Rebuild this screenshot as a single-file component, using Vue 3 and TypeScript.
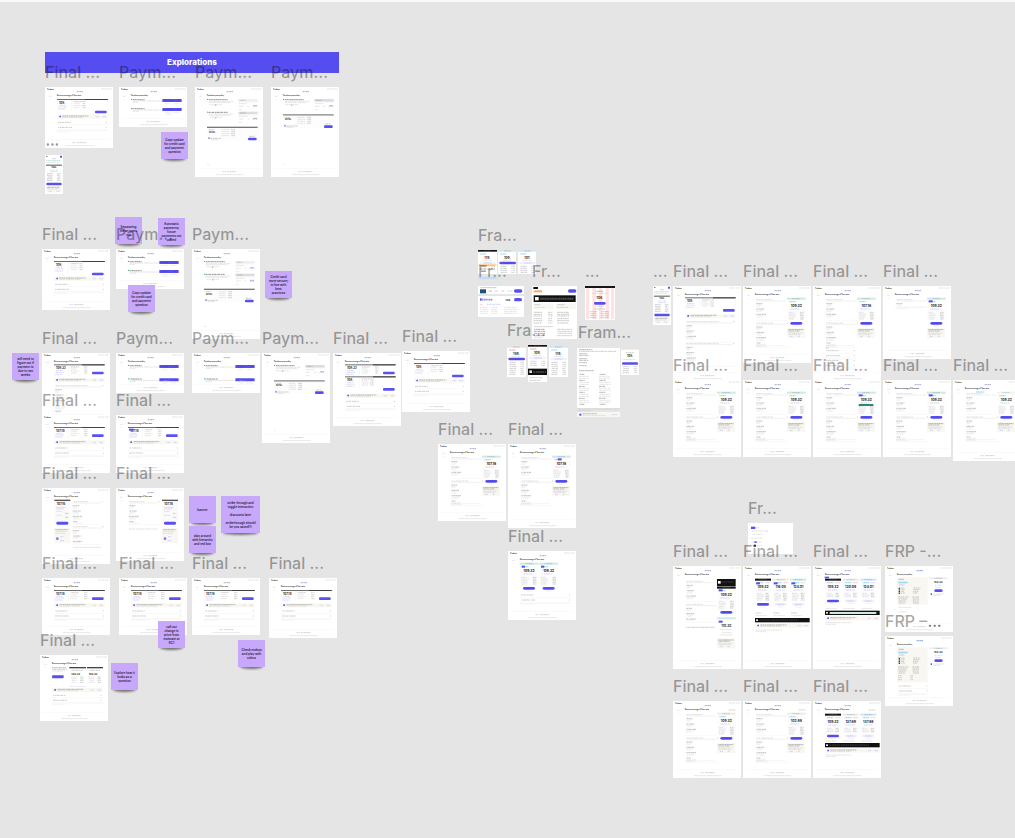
<script setup lang="ts">
interface Shape {
  k: 'rect' | 'line' | 'text'
  x: number
  y: number
  w: number
  h: number
  c: string
  r?: number
  s?: string
  anchor?: 'start' | 'middle' | 'end'
}
interface Board { x: number; y: number; w: number; h: number; art: Shape[]; clear?: boolean }
interface Label { x: number; y: number; text: string }
interface Note { x: number; y: number; w: number; h: number; text: string }

// Artwork inside a board is drawn on a grid of three units per canvas pixel.
const UNIT = 3
const BLUE = '#5850ee'
const INK = '#333333'
const MID = '#858585'
const SOFT = '#b9b9b9'
const LINK = '#9c98f0'
const CREAM = '#f8f7f2'
const MINT = '#cdeae3'
const SKY = '#52b4e8'

const rect = (x: number, y: number, w: number, h: number, c: string, r = 0): Shape => ({ k: 'rect', x, y, w, h, c, r })
const line = (x: number, y: number, w: number, c = SOFT, h = 2): Shape => ({ k: 'line', x, y, w, h, c })
const text = (x: number, y: number, size: number, s: string, c = INK, anchor: Shape['anchor'] = 'start'): Shape =>
  ({ k: 'text', x, y, w: 0, h: size, c, s, anchor })

function header(title: string): Shape[] {
  return [
    text(7, 8, 5, 'Fenbow', '#222222'),
    line(168, 6, 32, SOFT),
    line(94, 14, 20, '#7774b4', 3),
    line(12, 28, 9, '#c4c2f6'),
    line(15, 37, 4, '#c9c9c9'),
    text(36, 28, 5, title, '#222222'),
  ]
}
function footer(h: number): Shape[] {
  return [
    rect(8, h - 27, 188, 1, '#efefef'),
    line(82, h - 16, 11, LINK),
    line(96, h - 16, 28, '#8b8b8b'),
    line(62, h - 7, 84, SOFT),
  ]
}
function notice(y: number, x = 36, w = 152): Shape[] {
  return [
    rect(x, y, w, 12, CREAM),
    rect(x + 7, y + 3, 5, 5, BLUE, 1),
    line(x + 16, y + 4, 78, '#555555'),
    line(x + 16, y + 8, 62, SOFT),
    line(x + w - 36, y + 6, 10, LINK),
    line(x + w - 16, y + 6, 11, LINK),
  ]
}
function folds(y: number, x = 36, w = 152): Shape[] {
  return [
    line(x + 3, y, 38, MID), line(x + w - 6, y, 4, MID), rect(x, y + 7, w, 1, '#eeeeee'),
    line(x + 3, y + 15, 42, MID), line(x + w - 6, y + 15, 4, MID), rect(x, y + 21, w, 1, '#eeeeee'),
    line(x, y + 25, w, '#cccccc', 1), line(x, y + 28, 40, '#cccccc', 1),
  ]
}
function summary(y: number, price: string, low = false): Shape[] {
  const rows = [0, 1, 2, 3].flatMap((i) => [
    line(86, y + 8 + i * 6, 24 - (i % 2) * 6, i ? SOFT : MID),
    line(low ? 112 : 126, y + 8 + i * 6, 10, MID),
  ])
  return [
    rect(36, y, 152, 3, '#6c6c6c'), rect(120, y, 68, 3, '#414141'),
    rect(36, y + 3, 1, 38, '#f0f0f0'), rect(187, y + 3, 1, 38, '#f0f0f0'), rect(78, y + 4, 1, 32, '#ededed'),
    text(42, y + 14, 9, price, '#333333'),
    line(42, y + 19, 20, LINK), line(40, y + 24, 26, low ? SOFT : LINK), line(40, y + 30, 22, LINK),
    ...rows,
    rect(150, low ? y + 35 : y + 22, 35, 8, BLUE, 3), line(155, low ? y + 39 : y + 26, 24, '#837cf5', 1),
  ]
}
function review(h: number, price = '109.', low = false): Shape[] {
  const n = low ? 83 : 76
  return [...header('Review coverage of Your auto'), ...summary(36, price, low), ...notice(n), ...folds(n + 23), ...footer(h)]
}
function question(h: number, gap = 31): Shape[] {
  const part = (y: number): Shape[] => [
    rect(36, y, 3, 3, '#35b78a'), line(40, y + 2, 37, '#555555', 3),
    line(41, y + 6, 88, SOFT), line(41, y + 10, 18, SOFT),
    rect(130, y, 58, 9, BLUE, 1), line(136, y + 4, 22, '#3b34b5'), line(174, y + 4, 10, '#3b34b5'),
    line(138, y + 14, 17, '#cccccc'), line(164, y + 14, 17, '#cccccc'),
  ]
  return [...header('Purchase your policy'), ...part(36), ...part(36 + gap - 4), line(140, 82, 18, '#cccccc'), ...footer(h)]
}
function field(y: number, first: boolean): Shape[] {
  return [
    rect(36, y, 3, 3, '#35b78a'), line(40, y + 2, 58, '#555555', 3),
    line(41, y + 7, 74), line(41, y + 11, 66), line(42, y + 17, 40, SOFT), rect(60, y + 17, 4, 3, '#ef8c70'),
    rect(130, y, 58, 8, first ? '#efefef' : '#dddddd'), line(134, y + 4, 18, MID),
    rect(130, y + 10, 58, 1, '#eeeeee'), line(132, y + 14, 25, SOFT),
    line(132, y + 22, 14, SOFT), line(156, y + 22, 7, SOFT), line(174, y + 20, 12, '#7771b8', 3), line(172, y + 23, 15, LINK),
    line(132, y + 32, 9, SOFT),
  ]
}
function paySummary(y: number): Shape[] {
  return [
    rect(36, y, 152, 4, '#777777'), rect(36, y + 4, 152, 37, '#fdfdfd'),
    line(40, y + 9, 18, MID), text(42, y + 18, 8, '$119.', '#333333'),
    ...[0, 1, 2, 3].flatMap((i) => [line(80, y + 9 + i * 6, 22, SOFT), line(108, y + 9 + i * 6, 12, MID)]),
    rect(40, y + 32, 4, 5, BLUE, 2), line(46, y + 35, 34, MID), line(46, y + 39, 22),
    line(162, y + 29, 16, MID), rect(159, y + 33, 26, 8, BLUE, 3),
  ]
}
function payLong(h: number): Shape[] {
  return [...header('Purchase your policy'), ...field(36, true), ...field(74, false), ...paySummary(119), line(36, 233, 7), ...footer(h)]
}
function payShort(h: number): Shape[] {
  return [...header('Purchase your policy'), ...field(36, false), ...paySummary(82), line(36, 233, 5), ...footer(h)]
}
function listing(x: number, y: number, n: number, w = 92): Shape[] {
  const out: Shape[] = []
  for (let i = 0; i < n; i++) {
    const yy = y + i * 4
    const wide = i < 2
    const ww = wide ? w - 6 + i * 4 - (i ? 0 : 36) : 10 + ((i * 17) % 21)
    if (i > 1 && i % 4 === 2) continue
    out.push(line(x, yy, ww, i % 4 === 3 || !i ? '#686868' : '#a5a5a5', i % 4 === 3 ? 2 : 1))
  }
  out.push(line(x + w, y, 4, MID), rect(x - 3, y + n * 4 + 1, w + 8, 1, '#eeeeee'))
  return out
}
function quote(x: number, y: number, price: string, top = MINT, blue = true, w = 56, short = false): Shape[] {
  const mid = x + w / 2
  const b = short ? y + 63 : y + 73
  const out: Shape[] = [
    rect(x, y, w, b - y - 1, '#fdfdfd'), rect(x, y, w, 6, top), line(mid - 12, y + 3, 24, top === '#111111' ? '#777777' : '#779e96'),
    line(x + 6, y + 12, 20, SKY, 3), text(mid, y + 29, 10, price, '#272727', 'middle'),
    line(x + 9, y + 34, 28, LINK),
  ]
  for (let i = 0; i < (short ? 3 : 5); i++) out.push(line(x + 5, y + 44 + i * 5, 15 + ((i * 7) % 9), SOFT, 2), line(x + w - 17, y + 44 + i * 5, 11, MID, 2))
  out.push(rect(mid - 18, b, 36, 8, blue ? BLUE : '#efeeff', 4), line(mid - 10, b + 4, 20, blue ? '#3c35b8' : LINK), line(mid - 9, b + 12, 18, '#d2d2d2'))
  return out
}
function aside(x: number, y: number): Shape[] {
  return [rect(x, y, 54, 30, CREAM), line(x + 4, y + 5, 46, '#444444'), line(x + 4, y + 9, 34, '#666666'), line(x + 4, y + 15, 42), line(x + 4, y + 19, 38), line(x + 9, y + 25, 9, LINK), line(x + 30, y + 25, 9, LINK)]
}
function detail(h: number, price: string, top = MINT, list = 35): Shape[] {
  const first = Math.min(15, list)
  return [
    ...header('Review coverage of Your auto'),
    ...listing(40, 41, first),
    ...(list > 15 ? listing(40, 111, list - 17) : []),
    line(38, list > 15 ? 179 : 65, 88, '#bcbcbc', 1), line(38, list > 15 ? 182 : 68, 35, '#bcbcbc', 1),
    ...quote(132, 35, price, top), ...aside(132, 126), ...footer(h),
  ]
}
function leftCard(h: number, flip: boolean): Shape[] {
  const cx = flip ? 138 : 37
  const lx = flip ? 39 : 92
  return [
    ...header('Review coverage of Your auto'), ...listing(lx, 41, 17, 88), ...(flip ? [] : listing(lx, 116, 13, 88)),
    line(lx, flip ? 123 : 178, 86),
    rect(cx, 35, 48, 4, '#555555'), rect(cx, 39, 48, 68, '#fafafa'), text(cx + 7, 52, 9, '107.16', '#333333'),
    line(cx + 6, 58, 28, LINK), line(cx + 6, 63, 23, LINK), line(cx + 6, 70, 18), line(cx + 32, 76, 11, MID), line(cx + 6, 82, 18), line(cx + 32, 88, 11, MID),
    rect(cx + 6, 101, 36, 9, BLUE, 4), rect(cx, 120, 48, 45, CREAM), line(cx + 3, 125, 38, '#555555'), line(cx + 3, 130, 33), line(cx + 3, 136, 30),
    rect(cx + 5, 148, 8, 8, '#8078ea', 4), line(cx + 17, 146, 10, LINK), line(cx + 17, 158, 12, LINK), ...footer(h),
  ]
}
function trio(h: number, prices: string[], tops: string[], bar: number, mint = false): Shape[] {
  const short = bar < 140
  return [
    ...header('Review coverage of Your auto'),
    ...prices.flatMap((p, i) => [
      ...quote(36 + i * 53, 38, p, tops[i], i === 0, 48, short),
      line(68 + i * 53, 50, 13, '#d98298'),
    ]),
    ...[0, 1, 2].flatMap((i) => (short ? [line(38 + i * 53, bar - 6, 34)] : [line(38 + i * 53, bar - 15, 18, MID), line(38 + i * 53, bar - 7, 34)])),
    rect(36, bar, 164, 13, '#101010'), rect(39, bar + 4, 6, 5, '#dddddd'),
    mint ? rect(50, bar + 4, 140, 6, MINT) : line(50, bar + 6, 118, '#888888'),
    ...notice(bar + 17, 36, 164), line(38, bar + 36, 78), line(38, bar + 41, 32), ...footer(h),
  ]
}
function frp(h: number, long: boolean): Shape[] {
  return [
    ...header('Review your policy'), line(94, 14, 20, SKY), rect(36, 34, 92, long ? 105 : 82, CREAM),
    line(40, 40, 17, '#555555'), rect(40, 47, 28, 5, '#9ed9f6'), line(40, 57, 18, MID),
    ...[0, 1, 2, 3].flatMap((i) => [rect(41, 65 + i * 5, 4, 4, '#444444'), line(47, 66 + i * 5, 12, MID), line(84, 66 + i * 5, 22 - i * 3, MID)]),
    ...[0, 1, 2, 3].flatMap((i) => [line(40, 93 + i * 6, 30 - i * 3, '#777777'), line(82, 93 + i * 6, 20, '#777777')]),
    ...(long ? [0, 1, 2].flatMap((i) => [line(40, 119 + i * 6, 10, MID), line(76, 119 + i * 6, 8, MID)]) : []),
    rect(133, 34, 54, 5, '#ededed'), line(148, 37, 24, MID), text(160, 52, 8, '169.32', '#333333', 'middle'), line(148, 58, 23), line(150, 64, 20),
    rect(148, 70, 25, 8, BLUE, 4), rect(137, 82, 4, 5, BLUE), line(144, 84, 35), line(144, 88, 22),
    ...(long ? folds(150, 38, 92) : [line(40, 124, 38), line(40, 138, 25), line(40, 150, 28)]), ...footer(h),
    ...(long ? [] : [rect(133, 176, 6, 6, '#aaaaaa', 3), rect(146, 176, 6, 6, '#aaaaaa', 3), rect(159, 176, 6, 6, '#aaaaaa', 3)]),
  ]
}
function mobile(): Shape[] {
  return [
    rect(4, 3, 3, 3, '#444444'), rect(45, 2, 6, 6, BLUE, 1), line(20, 11, 14, '#7774b4'), line(4, 17, 45, '#58b8a4'), line(4, 22, 40, SOFT),
    rect(3, 29, 48, 3, '#555555'), text(27, 40, 8, '109.', INK, 'middle'), line(14, 45, 26), line(15, 50, 24, LINK),
    ...[0, 1, 2, 3, 4].flatMap((i) => [line(6, 56 + i * 5, 17, MID), line(36, 56 + i * 5, 10, MID)]),
    rect(4, 83, 46, 8, BLUE, 3), rect(3, 94, 48, 18, CREAM), line(6, 97, 38, '#555555'), line(6, 102, 34), line(11, 109, 9, LINK), line(34, 109, 9, LINK),
  ]
}
function mini(price: string, top: string, blue: boolean, h: number, accent = SKY): Shape[] {
  const out: Shape[] = [rect(0, 0, 58, 5, top), line(18, 3, 20, MID), line(7, 12, 20, accent, 3), text(28, 27, 10, price, INK, 'middle'), line(14, 31, 28)]
  out.push(rect(4, 35, 50, 8, blue ? BLUE : '#f1f0ff', 4), line(17, 39, 24, blue ? '#4039c4' : LINK))
  for (let y = 49; y < h - 4; y += 6) out.push(line(7, y, 20, MID), line(40, y, 11, MID))
  return out
}

const boards: Board[] = []
const labels: Label[] = []
const put = (x: number, y: number, h: number, art: Shape[], label = '', w = 68, clear = false) => {
  boards.push({ x, y, w, h, art, clear })
  if (label) labels.push({ x, y: y - 25, text: label })
}

put(45, 87, 61, [...review(183, '109.', true), rect(5, 169, 7, 7, '#999999', 3), rect(19, 169, 7, 7, '#999999', 3), rect(32, 169, 7, 7, '#999999', 3)], 'Final ...')
put(119, 87, 40, question(120), 'Paym...')
put(195, 87, 90, payLong(270), 'Paym...')
put(271, 87, 90, payShort(270), 'Paym...')
put(45, 155, 39, mobile(), '', 18)

put(42, 249, 61, review(183, '109.', true), 'Final ...')
put(116, 249, 40, question(120), 'Paym...')
put(192, 249, 90, payLong(270), 'Paym...')

put(42, 353, 64, [...header('Review coverage of Your auto'), ...summary(34, '109.32'), ...notice(75), ...listing(40, 98, 21, 140)], 'Final ...')
put(116, 353, 40, question(120, 44), 'Paym...')
put(192, 353, 40, question(120, 44), 'Paym...')
put(262, 353, 90, payShort(270), 'Paym...')
put(333, 353, 73, [...header('Review coverage of Your auto'), ...summary(34, '109.32'), ...summary(70, '109.', true), ...notice(122), ...folds(145), ...footer(219)], 'Final ...')
put(402, 351, 61, review(183, '109.', true), 'Final ...')
put(42, 415, 58, review(174, '107.16'), 'Final ...')
put(116, 415, 58, [...review(174, '107.16'), rect(39, 41, 14, 6, BLUE)], 'Final ...')
put(42, 488, 76, leftCard(228, false), 'Final ...')
put(116, 488, 73, leftCard(219, true), 'Final ...')
put(42, 578, 57, review(171, '107.16'), 'Final ...')
put(119, 578, 57, review(171, '107.16'), 'Final ...')
put(192, 578, 57, review(171, '107.16'), 'Final ...')
put(269, 578, 60, review(180, '107.16'), 'Final ...')
put(40, 655, 66, [
  ...header('Review coverage of Your auto'), line(36, 38, 42, '#555555'), line(36, 43, 45, '#777777'), line(36, 48, 38), rect(36, 61, 35, 9, BLUE, 3),
  rect(88, 36, 50, 4, '#444444'), rect(141, 36, 48, 4, '#444444'), rect(88, 94, 50, 1, '#c7c4fa'),
  ...[94, 146].flatMap((x) => [line(x, 46, 34, MID), text(x, 59, 8, '109.32'), ...[66, 71, 76, 82].flatMap((y) => [line(x, y, 16), line(x + 26, y, 11, MID)])]),
  ...notice(99), ...folds(121), ...footer(198),
], 'Final ...')

put(478, 250, 24, mini('119.', '#111111', false, 60), 'Fra...', 19)
put(498, 250, 24, mini('109.', '#cdeae3', true, 72), '', 18)
put(518, 250, 24, mini('107.', '#cfe5fa', false, 72), '', 18)
put(478, 264, 16, [rect(1, 0, 54, 7, '#ffd9a1'), line(5, 4, 43, '#e2a451'), line(4, 16, 48, MID), rect(0, 38, 62, 8, '#cde5fb'), line(4, 42, 50, '#72b2eb')], '', 21, true)
put(478, 286, 8, [line(7, 5, 48, '#666666'), rect(6, 10, 18, 12, '#23507b'), line(32, 15, 10, '#222222'), line(50, 15, 10, MID), line(70, 15, 9, MID), line(89, 15, 14, '#37aeb5'), rect(108, 10, 25, 10, BLUE, 5)], 'Fr...', 46)
put(478, 296, 21, [rect(6, 7, 5, 7, BLUE), line(12, 11, 31, '#575a92', 5), text(82, 14, 8, '108.'), rect(108, 6, 24, 10, BLUE, 5), line(6, 25, 9, '#ef89a0'), line(25, 25, 43, LINK), ...[34, 40, 46, 52].flatMap((y) => [line(6, y, 24), line(40, y, 18), line(78, y, 40)])], '', 46)
put(532, 286, 53, [
  rect(4, 3, 14, 6, '#111111'), rect(5, 13, 25, 6, '#f8a860'), rect(108, 10, 25, 10, BLUE, 5), rect(5, 28, 126, 20, '#101010'), rect(9, 33, 11, 10, '#ffffff'), line(23, 38, 101, '#777777', 6),
  rect(4, 53, 59, 17, CREAM), rect(72, 53, 59, 17, CREAM), line(7, 56, 18, MID), line(75, 56, 23, MID), line(7, 64, 32), line(75, 64, 34, LINK),
  ...[79, 85, 90, 98, 104, 111].flatMap((y) => [line(5, y, 25, '#777777'), line(48, y, 13, MID), line(75, y, 36, '#777777')]), line(5, 122, 58, MID),
  ...[130, 136, 142, 149].flatMap((y) => [line(6, y, 33, '#777777', 3), line(75, y, 45, MID)]), line(6, 155, 25, LINK),
], 'Fr...', 45)
put(585, 286, 34, [
  rect(3, 5, 10, 94, '#ffe2e2'), rect(22, 5, 10, 94, '#ffe2e2'), rect(42, 5, 10, 94, '#ffe2e2'), rect(62, 5, 10, 94, '#ffe2e2'), rect(78, 5, 9, 94, '#ffe2e2'), rect(0, 0, 90, 6, '#171717'),
  line(32, 16, 23, '#555555'), line(20, 22, 48), text(44, 38, 10, '108.', INK, 'middle'), rect(27, 48, 35, 8, BLUE, 4), line(32, 61, 25), line(28, 69, 32, MID),
  ...[77, 83, 89, 95].flatMap((y) => [line(15, y, 22, MID), line(48, y, 25, MID)]),
], '...', 30)
put(507, 346, 31, mini('159.', '#e7e4dd', true, 93, '#dc5e7b'), '', 19)
put(528, 345, 37, [...mini('109.', '#111111', false, 70, '#e25e5e'), rect(0, 71, 60, 19, '#101010'), rect(4, 76, 8, 8, '#dddddd'), line(16, 81, 38, '#777777', 4), line(5, 98, 38, MID), line(5, 106, 32, MID)], '', 19)
put(549, 346, 31, mini('119.', '#cfe5fa', false, 93), '', 19)
put(577, 348, 60, [
  line(6, 5, 40, '#444444'), line(6, 10, 112, MID), ...[17, 22, 32, 37, 44, 53].map((y) => line(6, y, 34 - (y % 3) * 5, '#555555')), line(6, 68, 44, '#444444'),
  ...Array.from({ length: 16 }, (_, i) => [line(6, 79 + i * 6, i % 3 ? 30 : 17, i % 3 ? SOFT : '#444444'), line(66, 79 + i * 6, i % 3 ? 34 : 20, i % 3 ? SOFT : '#444444')]).flat(),
], '', 43)
put(577, 408, 4, [line(2, 3, 123, SOFT), line(2, 8, 40, SOFT)], '', 43, true)
put(577, 412, 5, [rect(0, 0, 129, 15, CREAM), rect(7, 5, 6, 6, BLUE), line(17, 5, 43, '#666666'), line(17, 10, 70), line(104, 8, 18, LINK)], '', 43)
put(621, 348, 27, [rect(0, 0, 54, 5, '#e7e4dd'), line(14, 14, 25, MID), text(27, 27, 9, '108.', INK, 'middle'), line(5, 35, 39, LINK), rect(3, 43, 48, 7, BLUE, 3), ...[56, 62, 68, 74].flatMap((y) => [line(5, y, 19, MID), line(38, y, 10, MID)])], '', 18)
labels.push({ x: 507, y: 320, text: 'Fra...' }, { x: 578, y: 322, text: 'Fram...' })

put(438, 444, 77, detail(231, '107.16'), 'Final ...')
put(508, 444, 84, [...detail(252, '107.16'), rect(149, 43, 12, 6, BLUE)], 'Final ...')
put(508, 551, 69, [
  ...header('Review coverage of Your auto'), ...quote(35, 35, '109.32'), ...quote(94, 35, '109.32'), rect(41, 44, 10, 6, BLUE), rect(99, 44, 10, 6, BLUE), ...folds(132), ...footer(207),
], 'Final ...')

put(653, 286, 39, mobile(), '...', 18)
put(673, 286, 95, [...header('Review coverage of Your auto'), ...summary(34, '109.', true), ...notice(84), ...listing(40, 107, 15, 140), ...listing(40, 172, 17, 140), ...footer(285)], 'Final ...')
put(743, 286, 77, detail(231, '109.32'), 'Final ...')
put(813, 286, 95, [...detail(285, '107.16'), line(36, 186, 12, MID), ...folds(194, 36, 92), ...folds(224, 36, 92)], 'Final ...')
put(883, 286, 73, [...detail(219, '109.32', MINT, 5), rect(137, 43, 12, 6, BLUE)], 'Final ...')
put(673, 380, 77, detail(231, '109.32'), 'Final ...')
put(743, 380, 77, detail(231, '109.32'), 'Final ...')
put(813, 380, 77, [...detail(231, '109.32'), rect(137, 43, 12, 6, BLUE), rect(137, 72, 44, 6, '#31866f')], 'Final ...')
put(883, 380, 77, [...detail(231, '109.32'), rect(137, 43, 12, 6, BLUE)], 'Final ...')
put(953, 380, 81, [...detail(243, '109.32', '#f5f3ed'), line(68, 36, 27, SKY, 3)], 'Final ...')

put(748, 523, 31, [rect(9, 11, 13, 7, BLUE), line(24, 14, 10, LINK), line(11, 24, 36), line(49, 24, 11, LINK), line(12, 34, 31), line(8, 46, 34), rect(19, 55, 7, 5, BLUE), line(8, 57, 34), rect(17, 65, 7, 6, '#222222'), line(8, 68, 34)], 'Fr...', 45)
put(673, 566, 103, [
  ...header('Review coverage of Your auto'), ...listing(40, 46, 15), ...listing(40, 115, 13), line(38, 184, 88, MID),
  ...quote(132, 62, '109.32', '#111111'), rect(132, 39, 56, 22, '#111111'), rect(135, 45, 8, 8, '#ffffff'), line(146, 48, 36, '#777777'), rect(137, 70, 12, 6, BLUE),
  rect(132, 154, 56, 6, MINT), rect(137, 164, 12, 6, BLUE), text(160, 183, 10, '110.32', INK, 'middle'), line(142, 191, 35), line(146, 200, 30), line(142, 207, 36),
  ...aside(132, 217), ...footer(309),
], 'Final ...')
put(743, 566, 103, [...trio(309, ['109.32', '116.05', '124.01'], ['#111111', '#f0ece4', MINT], 156), rect(39, 49, 12, 6, BLUE), rect(92, 49, 12, 6, BLUE), rect(145, 49, 12, 6, BLUE)], 'Final ...')
put(813, 566, 103, [...trio(309, ['109.32', '130.08', '124.01'], ['#111111', '#f0ece4', '#cfe5fa'], 134, true), rect(35, 32, 13, 5, BLUE)], 'Final ...')
put(885, 566, 66, frp(198, false), 'FRP -...')
put(885, 636, 70, frp(210, true), 'FRP –...')
put(673, 701, 77, [...detail(231, '109.32', '#f0ece4'), line(166, 27, 22, SOFT, 3)], 'Final ...')
put(743, 701, 77, [...detail(231, '102.88', '#f0ece4'), line(166, 27, 22, SOFT, 3)], 'Final ...')
put(813, 701, 77, [...trio(231, ['109.32', '137.69', '137.68'], ['#111111', '#f0ece4', '#cfe5fa'], 126), line(166, 27, 22, SOFT, 3)], 'Final ...')

const notes: Note[] = [
  { x: 161, y: 132, w: 27, h: 27, text: 'Copy update\nfor credit card\nand payment\nquestion' },
  { x: 115, y: 217, w: 27, h: 27, text: 'Separating\nthese types\nout' },
  { x: 158, y: 218, w: 27, h: 27, text: 'Automatic\npayments/\nfuture\npayments not\nadded' },
  { x: 128, y: 285, w: 27, h: 27, text: 'Copy update\nfor credit card\nand payment\nquestion' },
  { x: 265, y: 271, w: 27, h: 27, text: 'Credit card\nmore secure/\nin line with\nbest\npractices' },
  { x: 12, y: 353, w: 27, h: 27, text: 'still need to\nfigure out if\npayment is\ndue in two\nweeks' },
  { x: 189, y: 496, w: 27, h: 27, text: 'banner' },
  { x: 189, y: 526, w: 27, h: 27, text: 'play around\nwith hierarchy\nand red box' },
  { x: 221, y: 496, w: 39, h: 37, text: 'strike through and\ntoggle interaction\n\ndiscounts later\n\nstrikethrough should\nbe you saved!!)' },
  { x: 158, y: 621, w: 27, h: 27, text: 'call out\nchange in\nprice from\nestimate at\nRC1' },
  { x: 238, y: 640, w: 27, h: 27, text: 'Check mobop\nand play with\ncolors' },
  { x: 111, y: 663, w: 27, h: 27, text: 'Explore how it\nlooks as a\nquestion' },
]

const box = (b: { x: number; y: number; w: number; h: number }) => ({
  left: `${b.x}px`, top: `${b.y}px`, width: `${b.w}px`, height: `${b.h}px`,
})
</script>

<template>
  <main class="canvas">
    <h1 class="banner">Explorations</h1>
    <div v-for="(b, i) in boards" :key="'b' + i" class="board" :class="{ clear: b.clear }" :style="box(b)">
      <svg :viewBox="`0 0 ${b.w * UNIT} ${b.h * UNIT}`" aria-hidden="true">
        <template v-for="(s, j) in b.art" :key="j">
          <rect v-if="s.k === 'rect'" :x="s.x" :y="s.y" :width="s.w" :height="s.h" :rx="s.r" :fill="s.c" />
          <path
            v-else-if="s.k === 'line'"
            class="copy"
            :d="`M${s.x} ${s.y}h${s.w}`"
            :stroke="s.c"
            :stroke-width="s.h"
            :stroke-dashoffset="(s.y * 7 + s.x) % 30"
          />
          <text v-else :x="s.x" :y="s.y" :font-size="s.h" :fill="s.c" :text-anchor="s.anchor">{{ s.s }}</text>
        </template>
      </svg>
    </div>
    <div v-for="(n, i) in notes" :key="'n' + i" class="note" :style="box(n)">
      <p>{{ n.text }}</p>
    </div>
    <span v-for="(l, i) in labels" :key="'l' + i" class="label" :style="{ left: l.x + 'px', top: l.y + 'px' }">{{ l.text }}</span>
  </main>
</template>

<style>
body {
  margin: 0;
  background: #e5e5e5;
}
</style>

<style scoped>
.canvas {
  position: relative;
  box-sizing: border-box;
  width: 100%;
  min-height: 100vh;
  overflow: hidden;
  background: #e5e5e5;
  box-shadow: inset 0 2px #fafafa;
  font-family: Inter, "Liberation Sans", sans-serif;
}
.banner {
  position: absolute;
  left: 45px;
  top: 52px;
  width: 294px;
  height: 21px;
  margin: 0;
  background: #554df0;
  color: #ffffff;
  font-size: 8px;
  font-weight: 800;
  line-height: 20px;
  text-align: center;
}
.board {
  position: absolute;
  background: #ffffff;
}
.board.clear {
  background: none;
}
.board svg {
  display: block;
  width: 100%;
  height: 100%;
  overflow: hidden;
}
.board.clear svg {
  overflow: visible;
}
.board text {
  font-family: Inter, "Liberation Sans", sans-serif;
  font-weight: 700;
}
.copy {
  fill: none;
  opacity: 0.62;
  stroke-dasharray: 7 1 4 1 6 2 5 1;
}
.note {
  position: absolute;
  z-index: 1;
  display: flex;
  align-items: center;
  justify-content: center;
}
.note::after {
  content: "";
  position: absolute;
  z-index: -1;
  left: 2px;
  right: 2px;
  bottom: -2px;
  height: 5px;
  border-radius: 50%;
  background: rgba(0, 0, 0, 0.5);
  filter: blur(1px);
}
.note::before {
  content: "";
  position: absolute;
  inset: 0;
  background: #c7a8fb;
}
.note p {
  position: relative;
  margin: 0;
  color: #241736;
  font-size: 3px;
  font-weight: 600;
  line-height: 4px;
  text-align: center;
  white-space: pre;
}
.label {
  position: absolute;
  z-index: 2;
  color: rgba(0, 0, 0, 0.36);
  font-size: 16px;
  font-weight: 500;
  line-height: 20px;
  white-space: nowrap;
}
</style>
